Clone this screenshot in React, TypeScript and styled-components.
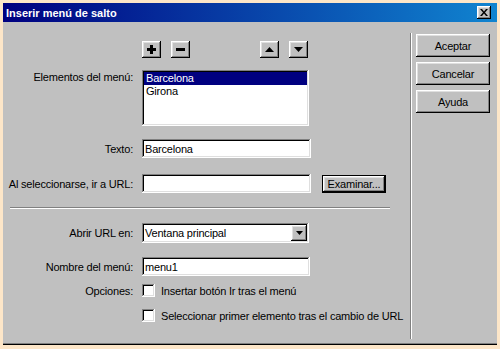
import React from "react";
import styled, { createGlobalStyle, css } from "styled-components";

const Global = createGlobalStyle`
  html, body { margin: 0; padding: 0; }
  body {
    background: #fde6c8;
    padding: 3px;
    font-family: "Liberation Sans", Arial, sans-serif;
    font-size: 11px;
    letter-spacing: -0.2px;
    color: #000;
  }
`;

const raised = css`
  background: #c0c0c0;
  box-shadow: inset -1px -1px #000, inset 1px 1px #fff, inset -2px -2px #808080, inset 2px 2px #dfdfdf;
`;

const sunken = css`
  background: #fff;
  box-shadow: inset -1px -1px #fff, inset 1px 1px #808080, inset -2px -2px #dfdfdf, inset 2px 2px #000;
`;

const Window = styled.div`
  width: 494px;
  height: 342px;
  background: #c0c0c0;
  display: flex;
  flex-direction: column;
  box-shadow: inset 0 -1px #000, inset 0 -2px #808080;
`;

const TitleBar = styled.div`
  height: 19px;
  display: flex;
  align-items: center;
  justify-content: space-between;
  padding: 0 6px 0 3px;
  background: linear-gradient(to right, #000080, #1084d0);
  color: #fff;
  font-weight: bold;
  font-size: 11px;
  letter-spacing: 0;
`;

const CloseButton = styled.div`
  ${raised};
  width: 14px;
  height: 13px;
  display: flex;
  align-items: center;
  justify-content: center;
`;

const Body = styled.div`
  flex: 1;
  display: flex;
`;

const Main = styled.div`
  width: 407px;
  display: flex;
  flex-direction: column;
`;

const VSep = styled.div`
  width: 1px;
  border-right: 1px solid #fff;
  background: #808080;
  margin: 11px 0 6px;
`;

const Side = styled.div`
  display: flex;
  flex-direction: column;
  gap: 5px;
  padding: 12px 0 0 4px;
`;

const Row = styled.div<{ $top: number; $align?: string }>`
  display: grid;
  grid-template-columns: 130px auto;
  column-gap: 9px;
  align-items: ${(p) => p.$align || "center"};
  margin-top: ${(p) => p.$top}px;
`;

const Label = styled.div<{ $pad?: number }>`
  text-align: right;
  white-space: nowrap;
  padding-top: ${(p) => p.$pad || 0}px;
`;

const Controls = styled.div<{ $gap?: number }>`
  display: flex;
  align-items: center;
  gap: ${(p) => p.$gap || 0}px;
`;

const SmallButton = styled.div<{ $ml?: number }>`
  ${raised};
  width: 19px;
  height: 17px;
  margin-left: ${(p) => p.$ml || 0}px;
  display: flex;
  align-items: center;
  justify-content: center;
`;

const ListBox = styled.div`
  ${sunken};
  width: 167px;
  height: 56px;
  padding: 2px;
  box-sizing: border-box;
`;

const ListItem = styled.div<{ $selected?: boolean }>`
  height: 13px;
  line-height: 13px;
  padding-left: 2px;
  background: ${(p) => (p.$selected ? "#000080" : "transparent")};
  color: ${(p) => (p.$selected ? "#fff" : "#000")};
`;

const Field = styled.div<{ $w: number; $h?: number }>`
  ${sunken};
  width: ${(p) => p.$w}px;
  height: ${(p) => p.$h || 19}px;
  box-sizing: border-box;
  padding: 0 3px;
  display: flex;
  align-items: center;
  justify-content: space-between;
  white-space: nowrap;
`;

const PushButton = styled.div<{ $w: number; $h: number; $focus?: boolean }>`
  ${raised};
  width: ${(p) => p.$w}px;
  height: ${(p) => p.$h}px;
  box-sizing: border-box;
  display: flex;
  align-items: center;
  justify-content: center;
  white-space: nowrap;
  ${(p) =>
    p.$focus &&
    css`
      border: 1px solid #000;
    `}
`;

const HSep = styled.div`
  margin: 14px 0 0 7px;
  width: 380px;
  height: 1px;
  background: #808080;
  border-bottom: 1px solid #fff;
`;

const DropButton = styled.div`
  ${raised};
  width: 16px;
  height: 16px;
  margin-right: -1px;
  display: flex;
  align-items: center;
  justify-content: center;
`;

const CheckRow = styled.div`
  display: flex;
  align-items: center;
  gap: 6px;
  white-space: nowrap;
`;

const CheckBox = styled.div`
  ${sunken};
  width: 13px;
  height: 13px;
  flex: none;
`;

const Plus = () => (
  <svg width="9" height="9" viewBox="0 0 9 9">
    <rect x="3" y="0" width="3" height="9" fill="#000" />
    <rect x="0" y="3" width="9" height="3" fill="#000" />
  </svg>
);
const Minus = () => (
  <svg width="9" height="9" viewBox="0 0 9 9">
    <rect x="0" y="3" width="9" height="3" fill="#000" />
  </svg>
);
const Tri = ({ up, w = 7 }: { up?: boolean; w?: number }) => {
  const h = Math.ceil(w / 2);
  return (
    <svg width={w} height={h} viewBox={`0 0 ${w} ${h}`}>
      <polygon
        points={up ? `0,${h} ${w},${h} ${w / 2},0` : `0,0 ${w},0 ${w / 2},${h}`}
        fill="#000"
      />
    </svg>
  );
};
const XIcon = () => (
  <svg width="8" height="7" viewBox="0 0 8 7">
    <path d="M0 0h2l2 2.5L6 0h2L5 3.5 8 7H6L4 4.5 2 7H0l3-3.5z" fill="#000" />
  </svg>
);

export default function App() {
  return (
    <>
      <Global />
      <Window>
        <TitleBar>
          <span>Inserir menú de salto</span>
          <CloseButton>
            <XIcon />
          </CloseButton>
        </TitleBar>
        <Body>
          <Main>
            <Row $top={19}>
              <span />
              <Controls>
                <SmallButton><Plus /></SmallButton>
                <SmallButton $ml={10}><Minus /></SmallButton>
                <SmallButton $ml={70}><Tri up w={9} /></SmallButton>
                <SmallButton $ml={10}><Tri w={9} /></SmallButton>
              </Controls>
            </Row>
            <Row $top={12} $align="start">
              <Label $pad={1}>Elementos del menú:</Label>
              <ListBox>
                <ListItem $selected>Barcelona</ListItem>
                <ListItem>Girona</ListItem>
              </ListBox>
            </Row>
            <Row $top={13}>
              <Label>Texto:</Label>
              <Field $w={169}>Barcelona</Field>
            </Row>
            <Row $top={16}>
              <Label>Al seleccionarse, ir a URL:</Label>
              <Controls $gap={11}>
                <Field $w={169} />
                <PushButton $w={64} $h={18} $focus>Examinar...</PushButton>
              </Controls>
            </Row>
            <HSep />
            <Row $top={14}>
              <Label>Abrir URL en:</Label>
              <Field $w={167} $h={20}>
                <span>Ventana principal</span>
                <DropButton><Tri w={7} /></DropButton>
              </Field>
            </Row>
            <Row $top={14}>
              <Label>Nombre del menú:</Label>
              <Field $w={168}>menu1</Field>
            </Row>
            <Row $top={8}>
              <Label>Opciones:</Label>
              <CheckRow>
                <CheckBox />
                <span>Insertar botón Ir tras el menú</span>
              </CheckRow>
            </Row>
            <Row $top={12}>
              <span />
              <CheckRow>
                <CheckBox />
                <span>Seleccionar primer elemento tras el cambio de URL</span>
              </CheckRow>
            </Row>
          </Main>
          <VSep />
          <Side>
            <PushButton $w={74} $h={23}>Aceptar</PushButton>
            <PushButton $w={74} $h={23}>Cancelar</PushButton>
            <PushButton $w={74} $h={23}>Ayuda</PushButton>
          </Side>
        </Body>
      </Window>
    </>
  );
}
